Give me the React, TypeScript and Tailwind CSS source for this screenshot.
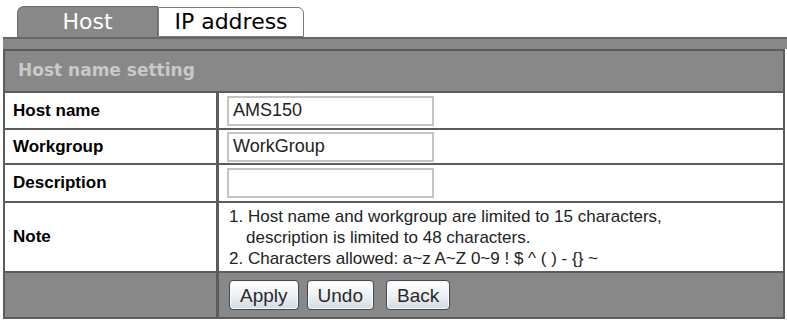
import React from "react";

const rows = [
  { label: "Host name", value: "AMS150", h: "h-[37px]" },
  { label: "Workgroup", value: "WorkGroup", h: "h-[35px]" },
  { label: "Description", value: "", h: "h-[38px]" },
];

const Btn = ({ children, className = "" }: { children: React.ReactNode; className?: string }) => (
  <button
    className={`h-[30px] px-[10px] rounded-[4px] border border-[#3d4a58] bg-gradient-to-b from-[#ffffff] via-[#eef1f5] to-[#d3dae3] text-[19px] leading-none text-[#2a2a2a] shadow-[inset_0_0_0_1px_#f7f9fb] ${className}`}
    style={{ fontFamily: '"Liberation Sans", Arial, sans-serif' }}
  >
    {children}
  </button>
);

export default function App() {
  return (
    <div className="w-[787px] h-[320px] bg-white overflow-hidden pt-[6px]">
      {/* tabs */}
      <div className="flex items-end pl-[17px] h-[31px]" style={{ fontFamily: '"DejaVu Sans", Verdana, sans-serif' }}>
        <div className="w-[141px] h-[31px] bg-[#888888] border border-b-0 border-[#6a6a6a] rounded-tl-[7px] flex items-center justify-center text-white text-[22px] leading-none">
          Host
        </div>
        <div className="w-[146px] h-[30px] bg-white border border-[#7a7a7a] rounded-tr-[6px] flex items-center justify-center text-black text-[22px] leading-none">
          IP address
        </div>
      </div>

      {/* bar under tabs */}
      <div className="ml-[3px] h-[12px] bg-[#888888] border-t-2 border-[#666666]" />

      {/* table */}
      <div className="ml-[3px] w-[782px] border-x-2 border-b-2 border-[#5c5c5c]">
        <div
          className="h-[44px] bg-[#888888] border-y-2 border-[#5c5c5c] flex items-center pl-[13px] text-[#c9c9c9] font-bold text-[17px]"
          style={{ fontFamily: '"DejaVu Sans", Verdana, sans-serif' }}
        >
          Host name setting
        </div>

        {rows.map((r) => (
          <div key={r.label} className={`flex border-b-2 border-[#5c5c5c] ${r.h}`}>
            <div
              className="w-[214px] shrink-0 border-r-[3px] border-[#5c5c5c] flex items-center pl-[8px] font-bold text-[17px] text-black"
              style={{ fontFamily: '"Liberation Sans", Arial, sans-serif' }}
            >
              {r.label}
            </div>
            <div className="flex-1 flex items-center pl-[8px]">
              <input
                defaultValue={r.value}
                className="w-[207px] h-[30px] border-2 border-[#c4c4c4] px-[4px] text-[18px] text-[#222] outline-none"
                style={{ fontFamily: '"Liberation Sans", Arial, sans-serif' }}
              />
            </div>
          </div>
        ))}

        {/* note */}
        <div className="flex h-[70px] border-b-2 border-[#5c5c5c]">
          <div
            className="w-[214px] shrink-0 border-r-[3px] border-[#5c5c5c] flex items-center pl-[8px] font-bold text-[17px] text-black"
            style={{ fontFamily: '"Liberation Sans", Arial, sans-serif' }}
          >
            Note
          </div>
          <div
            className="flex-1 flex flex-col justify-center pl-[10px] text-[17px] leading-[21px] text-[#222]"
            style={{ fontFamily: '"Liberation Sans", Arial, sans-serif' }}
          >
            <div>1. Host name and workgroup are limited to 15 characters,</div>
            <div className="pl-[17px]">description is limited to 48 characters.</div>
            <div>2. Characters allowed: a~z A~Z 0~9 ! $ ^ ( ) - {"{}"} ~</div>
          </div>
        </div>

        {/* buttons */}
        <div className="flex h-[44px] bg-[#888888]">
          <div className="w-[214px] shrink-0 border-r-[3px] border-[#5c5c5c]" />
          <div className="flex-1 flex items-center pl-[10px]">
            <Btn>Apply</Btn>
            <Btn className="ml-[8px]">Undo</Btn>
            <Btn className="ml-[12px]">Back</Btn>
          </div>
        </div>
      </div>
    </div>
  );
}
